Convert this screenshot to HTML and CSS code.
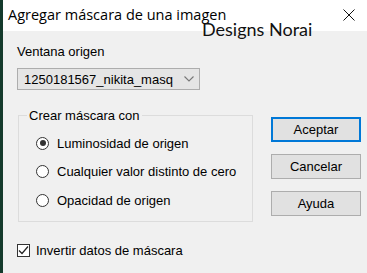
FILE: index.html
```html
<!DOCTYPE html>
<html lang="es">
<head>
<meta charset="utf-8">
<link rel="stylesheet" href="styles.css">
</head>
<body>
<div class="screen">
  <div class="strip"></div>
  <div class="window">
    <div class="titlebar">
      <span class="title">Agregar máscara de una imagen</span>
      <svg class="close" width="12" height="12" viewBox="0 0 12 12"><path d="M0.5 0.5 L11.5 11.5 M11.5 0.5 L0.5 11.5" stroke="#111" stroke-width="1" fill="none"/></svg>
    </div>
    <div class="content">
      <div class="left">
        <div class="label">Ventana origen</div>
        <div class="select">
          <span class="select-text">1250181567_nikita_masq</span>
          <svg class="chev" width="10" height="6" viewBox="0 0 10 6"><path d="M0.5 0.5 L5 5 L9.5 0.5" stroke="#777" stroke-width="1.1" fill="none"/></svg>
        </div>
        <fieldset class="group">
          <legend class="legend">Crear máscara con</legend>
          <div class="radios">
            <div class="radio-row"><span class="radio checked"></span><span>Luminosidad de origen</span></div>
            <div class="radio-row"><span class="radio"></span><span>Cualquier valor distinto de cero</span></div>
            <div class="radio-row"><span class="radio"></span><span>Opacidad de origen</span></div>
          </div>
        </fieldset>
        <div class="check-row">
          <span class="checkbox"><svg width="11" height="11" viewBox="0 0 11 11"><path d="M1 5.5 L4 8.5 L10 1.5" stroke="#222" stroke-width="1.2" fill="none"/></svg></span>
          <span>Invertir datos de máscara</span>
        </div>
      </div>
      <div class="right">
        <div class="btn default">Aceptar</div>
        <div class="btn">Cancelar</div>
        <div class="btn">Ayuda</div>
      </div>
    </div>
    <div class="watermark">Designs Norai</div>
  </div>
</div>
</body>
</html>
```
FILE: styles.css
```css
html, body { margin: 0; padding: 0; }
body { width: 367px; height: 273px; overflow: hidden; background: #f0f0f0; }
.screen { display: flex; width: 367px; height: 273px; }
.strip { width: 3px; background: #143a2c; flex: none; }
.window { position: relative; flex: 1; display: flex; flex-direction: column; background: #f0f0f0; font-family: "Liberation Sans", Arial, sans-serif; font-size: 13px; color: #000; }
.titlebar { height: 31px; background: #fff; display: flex; align-items: center; justify-content: space-between; padding: 0 12px 0 5px; flex: none; }
.title { font-family: "Open Sans", "Noto Sans", sans-serif; font-size: 14.5px; color: #000; margin-top: -2px; }
.close { margin-top: -2px; }
.content { display: flex; flex: 1; }
.left { width: 236px; padding-left: 14px; padding-top: 13px; flex: none; }
.label { line-height: 15px; height: 15px; }
.select { margin-top: 9px; height: 20px; border: 1px solid #adadad; background: #e5e5e5; display: flex; align-items: center; justify-content: space-between; padding: 0 5px 0 6px; width: 170px; }
.select-text { line-height: 15px; white-space: nowrap; }
.group { margin: 18px 0 0 1px; padding: 0; border: 1px solid #dcdcdc; width: 235px; height: 114px; box-sizing: border-box; min-width: 0; }
.legend { padding: 0 2px; margin-left: 8px; line-height: 15px; }
.radios { padding: 6px 0 0 17px; }
.radio-row { display: flex; align-items: center; height: 28.5px; white-space: nowrap; }
.radio { width: 11px; height: 11px; border: 1px solid #333; border-radius: 50%; background: #fff; margin-right: 8px; position: relative; flex: none; }
.radio.checked::after { content: ""; position: absolute; left: 2.5px; top: 2.5px; width: 6px; height: 6px; border-radius: 50%; background: #333; }
.check-row { display: flex; align-items: center; margin-top: 21px; line-height: 15px; }
.checkbox { width: 11px; height: 11px; border: 1px solid #333; background: #fff; margin-right: 6px; display: flex; align-items: center; justify-content: center; }
.right { display: flex; flex-direction: column; padding-top: 86px; padding-left: 18px; gap: 12px; }
.btn { width: 88px; height: 23px; border: 1px solid #adadad; background: #e1e1e1; display: flex; align-items: center; justify-content: center; }
.btn.default { border: 2px solid #0078d7; width: 86px; height: 21px; }
.watermark { position: absolute; left: 199px; top: 18px; font-family: "Lato", "Open Sans", sans-serif; font-size: 18px; color: #111; }
```
